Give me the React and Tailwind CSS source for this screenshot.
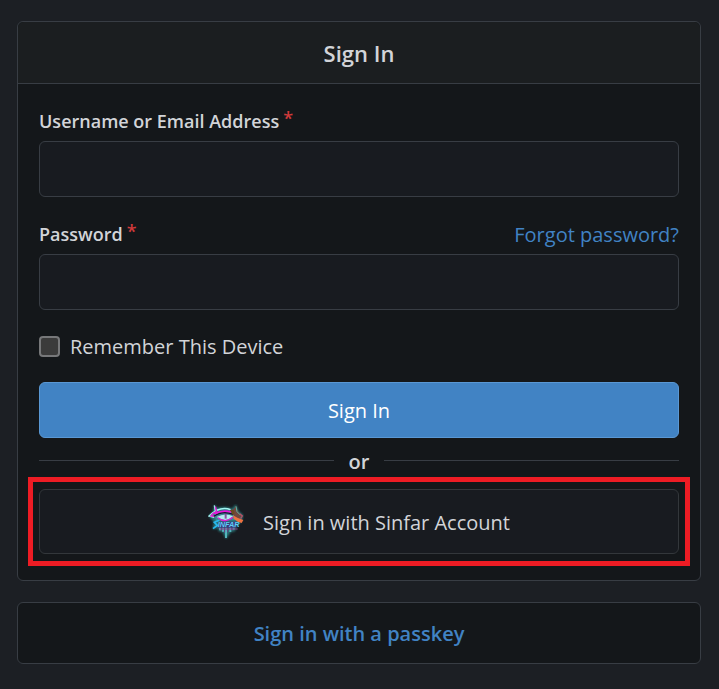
function Logo() {
  return (
    <svg viewBox="24 22 108 108" className="size-9 shrink-0" aria-hidden="true">
      <defs>
        <filter id="glow" x="-20%" y="-20%" width="140%" height="140%">
          <feGaussianBlur stdDeviation="2.5" />
        </filter>
      </defs>
      <path
        d="M43 24 L52 34 Q78 27 96 36 L108 23 L115 42 L130 56 L124 76 L112 84 L105 104 L92 106 L78 128 L68 106 L56 104 L54 94 L38 98 L42 76 L26 58 L38 46 Z"
        fill="#2f9a9c"
        opacity="0.7"
        filter="url(#glow)"
      />
      <path d="M42 50 Q72 34 106 50 L112 70 L46 74 L48 66 L32 58 Z" fill="#3d8494" />
      <path d="M50 41 Q72 31 92 39" fill="none" stroke="#a4f4f2" strokeWidth="5" />
      <path d="M43 26 L46 43 L37 49 L27 58 L42 62" fill="none" stroke="#9deee9" strokeWidth="4" />
      <path d="M46 30 L50 44 L40 50 L33 58 L44 59" fill="none" stroke="#e619d6" strokeWidth="4" />
      <path d="M50 61 Q76 47 99 59 Q78 80 50 61Z" fill="#b5ecf0" />
      <path d="M42 59 Q66 40 100 53" fill="none" stroke="#1d0b2a" strokeWidth="4" />
      <path d="M44 51 Q68 39 94 46" fill="none" stroke="#ed12dd" strokeWidth="5" />
      <path d="M54 63 Q76 82 98 62" fill="none" stroke="#e01fd2" strokeWidth="4" />
      <path d="M77 52 V66" stroke="#8b4f9f" strokeWidth="6" />
      <path d="M89 40 L101 38 L108 27 L114 43 L124 57 L117 69 L104 62 L99 49 Z" fill="#70473f" />
      <path d="M90 40 L101 40 L104 52 L98 54 Z" fill="#6b4a1e" />
      <path d="M108 29 L111 45 L121 55" fill="none" stroke="#5bb5a6" strokeWidth="3" />
      <path d="M99 56 L112 63 L130 70 L125 79 L113 75 L101 66 Z" fill="#ef7140" />
      <path d="M119 51 L127 58 L122 66" fill="none" stroke="#b55165" strokeWidth="4" />
      <path d="M60 92 V101 M69 92 V105 M78 92 V124 M91 92 V106 M101 90 V99" stroke="#52b6bd" strokeWidth="6" />
      <path d="M65 93 V101 M74 92 V108 M83 92 V107 M95 92 V101" stroke="#6a3c84" strokeWidth="3" />
      <path d="M56 75 H112 L108 93 H52 Z" fill="#3b3a7c" />
      <path d="M58 97 H113" stroke="#843f86" strokeWidth="3" />
      <text
        x="53"
        y="92"
        fontFamily="'Liberation Sans', sans-serif"
        fontStyle="italic"
        fontWeight="700"
        fontSize="22"
        fill="#5ccdf5"
      >
        INFAR
      </text>
      <path d="M58 71 L43 77 L52 86 L39 96" fill="none" stroke="#28b9ee" strokeWidth="5" />
    </svg>
  );
}

function Required() {
  return <span className="ml-1 inline-block align-[3px] leading-none text-[#d03a3a]">*</span>;
}

const labelClass = "block h-8 text-lg leading-8 font-semibold";
const inputClass =
  "mt-1 block h-14 w-full rounded-md border border-[#383d44] bg-[#181b20] px-4 text-xl outline-none focus:border-[#4183c4]";

export default function App() {
  return (
    <main className="min-h-screen bg-[#1c1f24] pt-[21px] pr-[18px] pb-6 pl-[17px] font-['Open_Sans','Noto_Sans',sans-serif] text-xl leading-8 text-[#d2d4d8]">
      <section className="rounded-md border border-[#383d44] bg-[#14171a]">
        <h1 className="flex h-[62px] items-center justify-center rounded-t-md border-b border-[#383d44] bg-[#1b1e20] text-[22px] font-semibold">
          Sign In
        </h1>
        <form className="px-[21px] pt-[21px] pb-[26px]" onSubmit={(e) => e.preventDefault()}>
          <label htmlFor="user" className={labelClass}>
            Username or Email Address
            <Required />
          </label>
          <input id="user" type="text" className={inputClass} />

          <div className="mt-[21px] flex h-8 items-center justify-between">
            <label htmlFor="password" className={labelClass}>
              Password
              <Required />
            </label>
            <a href="#forgot" className="pt-0.5 text-[#4183c4]">
              Forgot password?
            </a>
          </div>
          <input id="password" type="password" className={inputClass} />

          <div className="mt-5 flex h-8 items-center gap-2.5">
            <input
              id="remember"
              type="checkbox"
              className="size-[21px] appearance-none rounded-sm border-2 border-[#77787a] bg-[#3b3b3b] checked:bg-[#4183c4]"
            />
            <label htmlFor="remember" className="pt-0.5">
              Remember This Device
            </label>
          </div>

          <button
            type="submit"
            className="mt-5 block h-14 w-full rounded-md border border-[#5a98d4] bg-[#4183c4] pt-0.5 text-white"
          >
            Sign In
          </button>

          <div className="mt-1.5 mb-[13px] flex h-8 items-center gap-[15px] font-semibold">
            <span className="h-px flex-1 bg-[#383d44]" />
            <span className="pt-1">or</span>
            <span className="h-px flex-1 bg-[#383d44]" />
          </div>

          <div className="relative">
            <button
              type="button"
              className="flex h-[65px] w-full items-center justify-center gap-[19px] rounded-md border border-[#33373b] bg-[#181b20]"
            >
              <Logo />
              <span className="pt-0.5">Sign in with Sinfar Account</span>
            </button>
            <span className="pointer-events-none absolute -inset-x-[11px] -inset-y-3 border-5 border-[#ed1c24]" />
          </div>
        </form>
      </section>

      <button
        type="button"
        className="mt-[21px] block h-[62px] w-full rounded-md border border-[#383d44] bg-[#14171a] pt-0.5 font-semibold text-[#4183c4]"
      >
        Sign in with a passkey
      </button>
    </main>
  );
}
